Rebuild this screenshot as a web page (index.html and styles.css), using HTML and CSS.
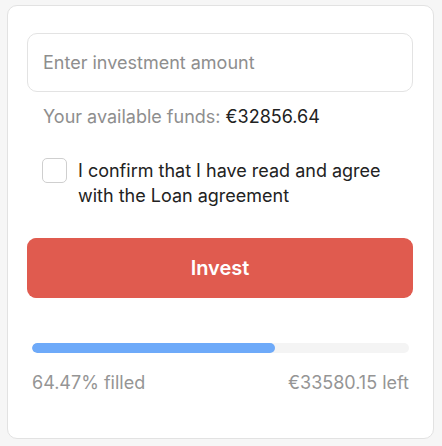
FILE: index.html
```html
<!DOCTYPE html>
<html lang="en">
<head>
    <meta charset="UTF-8">
    <meta name="viewport" content="width=device-width, initial-scale=1.0">
    <title>Invest</title>
    <link rel="stylesheet" href="styles.css">
</head>
<body>
    <!-- Investment Card -->
    <div class="card">
        <input class="amount-input" type="text" placeholder="Enter investment amount">

        <p class="funds">Your available funds: <span class="funds-value">€32856.64</span></p>

        <label class="agree">
            <input type="checkbox" class="agree-box">
            <span class="agree-text">I confirm that I have read and agree with the Loan agreement</span>
        </label>

        <button class="invest-btn">Invest</button>

        <!-- Progress -->
        <div class="progress">
            <div class="progress-track">
                <div class="progress-fill" style="width: 64.47%"></div>
            </div>
            <div class="progress-labels">
                <span>64.47% filled</span>
                <span>€33580.15 left</span>
            </div>
        </div>
    </div>
</body>
</html>
```

FILE: styles.css
```css
/* Reset and Base Styles */
* {
    margin: 0;
    padding: 0;
    box-sizing: border-box;
    font-family: Inter, 'Noto Sans', sans-serif;
}

body {
    background-color: #f6f6f6;
    color: #222;
    padding: 5px 8px 7px 7px;
}

/* Card */
.card {
    background-color: white;
    border: 1px solid #e2e2e2;
    border-radius: 10px;
    padding: 27px 20px 43px 19px;
}

.amount-input {
    display: block;
    width: 100%;
    height: 59px;
    border: 1px solid #e3e3e3;
    border-radius: 10px;
    padding: 0 15px;
    font-size: 18px;
    color: #222;
    outline: none;
}

.amount-input::placeholder {
    color: #8e8e8e;
}

.funds {
    margin: 13px 0 0 16px;
    font-size: 18px;
    line-height: 24px;
    color: #8e8e8e;
}

.funds-value {
    color: #222;
}

/* Agreement */
.agree {
    display: flex;
    align-items: flex-start;
    gap: 11px;
    margin: 29px 20px 0 15px;
    cursor: pointer;
}

.agree-box {
    appearance: none;
    flex-shrink: 0;
    width: 25px;
    height: 25px;
    border: 1px solid #cfcfcf;
    border-radius: 5px;
    background: white;
}

.agree-text {
    font-size: 18px;
    line-height: 25px;
    color: #222;
}

/* Button */
.invest-btn {
    display: block;
    width: 100%;
    height: 60px;
    margin-top: 30px;
    border: none;
    border-radius: 9px;
    background-color: #e05b4f;
    color: white;
    font-size: 20px;
    font-weight: 600;
    cursor: pointer;
}

/* Progress */
.progress {
    padding: 0 4px 0 5px;
    margin-top: 45px;
}

.progress-track {
    height: 10px;
    border-radius: 5px;
    background-color: #f4f4f4;
    overflow: hidden;
}

.progress-fill {
    height: 100%;
    border-radius: 5px;
    background-color: #6eaaf9;
}

.progress-labels {
    display: flex;
    justify-content: space-between;
    margin-top: 18px;
    font-size: 18px;
    line-height: 24px;
    color: #959595;
}
```
